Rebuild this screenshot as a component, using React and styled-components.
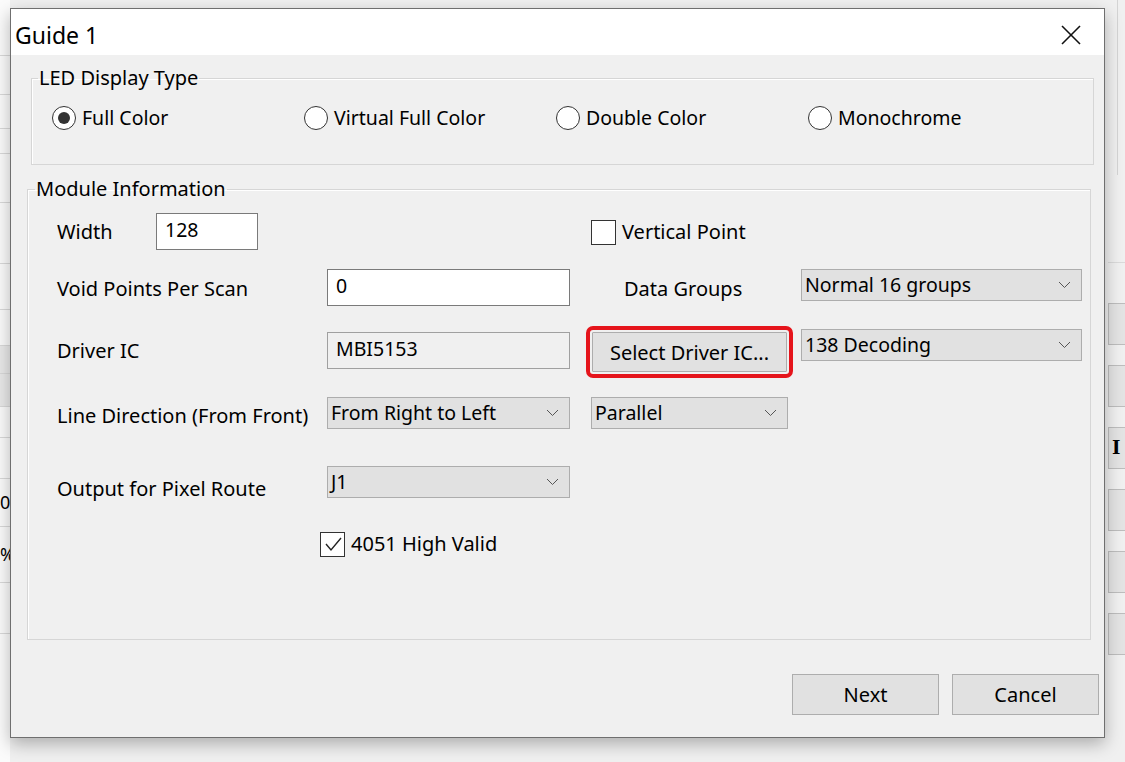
import React from 'react'
import styled, { createGlobalStyle } from 'styled-components'

const Global = createGlobalStyle`
  body {
    margin: 0;
    background: #f0f0f0;
    font-family: "Noto Sans", "Open Sans", sans-serif;
    color: #000;
  }
`

const Screen = styled.div`
  width: 1125px;
  height: 762px;
  overflow: hidden;
  display: flex;
  flex-direction: column;
  background: #f0f0f0;
`
const TopStrip = styled.div`
  height: 3px;
  background: #2b2b2b;
`
const Desk = styled.div`
  flex: 1;
  display: flex;
  align-items: flex-start;
`

/* background app, left edge */
const LeftPane = styled.div`
  width: 10px;
  height: 100%;
  display: flex;
  flex-direction: column;
  background: #f7f7f7;
`
const Cell = styled.div`
  height: ${({ $h }) => $h}px;
  border-bottom: 1px solid #d9d9d9;
  background: ${({ $shade }) => ($shade ? '#e9e9e9' : '#fbfbfb')};
  font-size: 18px;
  line-height: ${({ $h }) => $h}px;
  overflow: hidden;
  white-space: nowrap;
`

/* background app, right edge */
const RightPane = styled.div`
  width: 20px;
  height: 100%;
  display: flex;
  flex-direction: column;
  padding-left: 3px;
  box-sizing: border-box;
`
const RightTop = styled.div`
  height: 262px;
  border-bottom: 1px solid #dadada;
  display: flex;
`
const RightLine = styled.div`
  width: 9px;
  border-right: 1px solid #d4d4d4;
  height: 175px;
`
const RightButtons = styled.div`
  display: flex;
  flex-direction: column;
  gap: 20px;
  padding-top: 40px;
`
const SideButton = styled.div`
  height: 40px;
  border: 1px solid #bdbdbd;
  border-right: none;
  background: #e3e3e3;
  font-family: "DejaVu Serif", serif;
  font-size: 18px;
  font-weight: bold;
  line-height: 40px;
  padding-left: 3px;
  overflow: hidden;
`

/* dialog */
const Dialog = styled.div`
  position: relative;
  z-index: 1;
  margin-top: 8px;
  width: 1095px;
  height: 730px;
  box-sizing: border-box;
  border: 1px solid #6f6f6f;
  background: #f0f0f0;
  box-shadow: 0 6px 16px rgba(0, 0, 0, 0.28);
  display: flex;
  flex-direction: column;
`
const TitleBar = styled.div`
  height: 46px;
  background: #fff;
  display: flex;
  align-items: center;
  justify-content: space-between;
  padding: 0 23px 0 4px;
  flex-shrink: 0;
`
const Title = styled.div`
  font-size: 23px;
  margin-top: 6px;
`
const CloseIcon = styled.svg`
  margin-top: 5px;
`
const Body = styled.div`
  flex: 1;
  display: flex;
  flex-direction: column;
`

const Group = styled.fieldset`
  margin: ${({ $m }) => $m};
  padding: ${({ $p }) => $p};
  border: 1px solid #d6d6d6;
  box-shadow: inset 1px 1px 0 #fff;
  min-width: 0;
  height: ${({ $h }) => $h}px;
  box-sizing: border-box;
`
const Legend = styled.legend`
  font-size: 20px;
  line-height: 26px;
  padding: 0 1px;
  margin-left: ${({ $ml }) => $ml}px;
`

const RadioRow = styled.div`
  display: flex;
`
const RadioItem = styled.label`
  width: 252px;
  display: flex;
  align-items: center;
  gap: 6px;
  font-size: 19.5px;
  line-height: 26px;
`
const RadioCircle = styled.span`
  width: 24px;
  height: 24px;
  box-sizing: border-box;
  border-radius: 50%;
  border: 1.5px solid #333;
  background: #fff;
  display: flex;
  align-items: center;
  justify-content: center;
  &::after {
    content: '';
    width: 12px;
    height: 12px;
    border-radius: 50%;
    background: ${({ $on }) => ($on ? '#333' : 'transparent')};
  }
`

const Grid = styled.div`
  display: grid;
  grid-template-columns: 99px 171px 264px 210px 281px;
  grid-template-rows: 56px 60px 68px 69px 65px 25px;
  align-items: start;
`
const Label = styled.div`
  font-size: 20px;
  line-height: 26px;
  margin-top: ${({ $t }) => $t}px;
  padding-left: ${({ $pl }) => $pl || 0}px;
  grid-column: ${({ $col }) => $col || 'auto'};
  white-space: nowrap;
`
const TextBox = styled.div`
  width: ${({ $w }) => $w}px;
  height: 37px;
  box-sizing: border-box;
  border: 1px solid ${({ $disabled }) => ($disabled ? '#a0a0a0' : '#7a7a7a')};
  background: ${({ $disabled }) => ($disabled ? '#f0f0f0' : '#fff')};
  margin-top: ${({ $t }) => $t || 0}px;
  padding-left: 8px;
  font-size: 19.5px;
  line-height: 32px;
  grid-column: ${({ $col }) => $col || 'auto'};
`
const SelectBox = styled.div`
  width: ${({ $w }) => $w}px;
  height: 32px;
  box-sizing: border-box;
  border: 1px solid #adadad;
  background: #e1e1e1;
  display: flex;
  align-items: center;
  justify-content: space-between;
  padding: 0 10px 0 3px;
  font-size: 19.5px;
  line-height: 26px;
  grid-column: ${({ $col }) => $col || 'auto'};
`
const CheckRow = styled.label`
  display: flex;
  align-items: center;
  gap: 6px;
  font-size: 20px;
  line-height: 26px;
  margin-top: ${({ $t }) => $t || 0}px;
  margin-left: ${({ $l }) => $l || 0}px;
  grid-column: ${({ $col }) => $col || 'auto'};
`
const CheckBox = styled.span`
  width: 25px;
  height: 25px;
  box-sizing: border-box;
  border: 1.5px solid #333;
  background: #fff;
  display: flex;
  align-items: center;
  justify-content: center;
`
const PushButton = styled.button`
  font-family: inherit;
  font-size: 20px;
  color: #000;
  width: ${({ $w }) => $w}px;
  height: ${({ $h }) => $h}px;
  border: 1px solid #adadad;
  background: #e1e1e1;
  padding: 0;
  margin: 0;
`
const Flagged = styled(PushButton)`
  margin: 3px 0 0 1px;
  outline: 4px solid #e5141b;
  outline-offset: 2px;
  border-radius: 1px;
`
const Footer = styled.div`
  display: flex;
  justify-content: flex-end;
  gap: 13px;
  padding: 34px 5px 0 0;
`

const Chevron = () => (
  <svg width="13" height="8" viewBox="0 0 13 8">
    <polyline points="1,1 6.5,6.5 12,1" fill="none" stroke="#555" strokeWidth="1" />
  </svg>
)

const Select = ({ w, col, children }) => (
  <SelectBox $w={w} $col={col}>
    <span>{children}</span>
    <Chevron />
  </SelectBox>
)

const radios = ['Full Color', 'Virtual Full Color', 'Double Color', 'Monochrome']

const leftCells = [
  [55], [38], [33], [24], [48], [60], [45], [35], [27, true], [32, true], [30], [40], [47, false, '0'], [55, false, '%'], [50], [160],
]

const App = () => {
  return (
    <Screen>
      <Global />
      <TopStrip />
      <Desk>
        <LeftPane>
          {leftCells.map(([h, shade, t], i) => (
            <Cell key={i} $h={h} $shade={shade}>{t}</Cell>
          ))}
        </LeftPane>

        <Dialog>
          <TitleBar>
            <Title>Guide 1</Title>
            <CloseIcon width="20" height="20" viewBox="0 0 20 20">
              <line x1="1" y1="1" x2="19" y2="19" stroke="#111" strokeWidth="1.6" />
              <line x1="19" y1="1" x2="1" y2="19" stroke="#111" strokeWidth="1.6" />
            </CloseIcon>
          </TitleBar>

          <Body>
            <Group $m="10px 10px 0 20px" $p="14px 0 0 20px" $h={100}>
              <Legend $ml={-14}>LED Display Type</Legend>
              <RadioRow>
                {radios.map((r, i) => (
                  <RadioItem key={r}>
                    <RadioCircle $on={i === 0} />
                    {r}
                  </RadioItem>
                ))}
              </RadioRow>
            </Group>

            <Group $m="11px 13px 0 16px" $p="11px 0 0 29px" $h={464}>
              <Legend $ml={-22}>Module Information</Legend>
              <Grid>
                <Label $t={6}>Width</Label>
                <TextBox $w={102}>128</TextBox>
                <CheckRow $col="4 / 6" $t={6}>
                  <CheckBox />
                  Vertical Point
                </CheckRow>

                <Label $t={7} $col="1 / 3">Void Points Per Scan</Label>
                <TextBox $w={243}>0</TextBox>
                <Label $t={7} $pl={33}>Data Groups</Label>
                <Select w={281}>Normal 16 groups</Select>

                <Label $t={9} $col="1 / 3">Driver IC</Label>
                <TextBox $w={243} $t={3} $disabled>MBI5153</TextBox>
                <Flagged $w={195} $h={40}>Select Driver IC...</Flagged>
                <Select w={281}>138 Decoding</Select>

                <Label $t={6} $col="1 / 3">Line Direction (From Front)</Label>
                <Select w={243}>From Right to Left</Select>
                <Select w={197} col="4 / 6">Parallel</Select>

                <Label $t={10} $col="1 / 3">Output for Pixel Route</Label>
                <Select w={243} col="3 / 4">J1</Select>

                <CheckRow $col="3 / 5" $l={-7}>
                  <CheckBox>
                    <svg width="20" height="20" viewBox="0 0 20 20">
                      <polyline points="3,10 8,16 18,4" fill="none" stroke="#222" strokeWidth="1.4" />
                    </svg>
                  </CheckBox>
                  4051 High Valid
                </CheckRow>
              </Grid>
            </Group>

            <Footer>
              <PushButton $w={147} $h={41}>Next</PushButton>
              <PushButton $w={147} $h={41}>Cancel</PushButton>
            </Footer>
          </Body>
        </Dialog>

        <RightPane>
          <RightTop>
            <RightLine />
          </RightTop>
          <RightButtons>
            <SideButton />
            <SideButton />
            <SideButton>I</SideButton>
            <SideButton />
            <SideButton />
            <SideButton />
          </RightButtons>
        </RightPane>
      </Desk>
    </Screen>
  )
}

export default App
